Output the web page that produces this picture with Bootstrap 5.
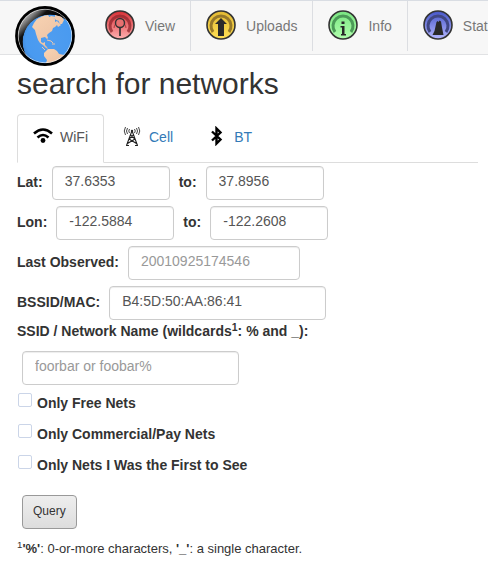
<!DOCTYPE html>
<html lang="en">
<head>
<meta charset="utf-8">
<meta name="viewport" content="width=device-width, initial-scale=1">
<title>search for networks</title>
<link href="https://cdn.jsdelivr.net/npm/bootstrap@5.3.0/dist/css/bootstrap.min.css" rel="stylesheet">
<style>
body{font-family:"Liberation Sans",Arial,sans-serif;font-size:14px;line-height:20px;color:#333;overflow-x:hidden}
.site-bar{background:#f7f7f7;border-top:1px solid #d9dde3;border-bottom:1px solid #e1e2e4;height:55px}
.globe-link{width:60px;height:60px;margin:5px 0 0 15px;z-index:2}
.bar-links{margin-left:15px}
.bar-links a{color:#777;padding:10px 15px;gap:10px;height:50px;border-right:1px solid #dcdee2}
.bar-links svg{margin-bottom:2px}
.search-area{padding:11px 10px 8px 17px}
h1{font-size:30px;line-height:36px;margin:0 0 12px}
.nav-tabs{--bs-nav-tabs-border-color:#ddd;--bs-nav-tabs-link-active-border-color:#ddd #ddd #fff;--bs-nav-tabs-link-active-color:#555;--bs-nav-link-color:#337ab7;--bs-nav-tabs-border-radius:4px}
.nav-tabs .nav-link{height:49px;padding:0 15px;display:flex;align-items:center;gap:7px;margin-right:2px}
.nav-tabs .nav-link svg{margin-bottom:6px}
.nav-tabs .nav-link span{padding-bottom:3px}
.search-row{gap:9px;height:40px}
.search-row label{padding-bottom:2px}
label{font-weight:700}
.form-control{width:118px;height:34px;padding:4px 12px 8px;font-size:14px;line-height:20px;color:#555;border:1px solid #ccc;border-radius:4px;box-shadow:inset 0 1px 1px rgba(0,0,0,.075)}
.form-control::placeholder{color:#999}
.w-date{width:172px}
.w-name{width:217px}
.ssid-label{margin-top:-2px}
.ssid-input{margin:10px 5px 8px}
.check-row{gap:5px;height:20px;margin-bottom:11px}
.check-row .form-check-input{width:14px;height:14px;margin:0 0 6px 1px;border:1px solid #cbd5e8;border-radius:2px}
.query-btn{height:34px;margin:9px 5px 0;padding:0 10px 3px;font-size:12px;color:#333;border:1px solid #999;border-radius:4px;background:linear-gradient(#eee,#ddd)}
.footnote{font-size:13px;margin:10px 0 0}
sup{font-size:75%}
</style>
<script src="https://cdn.jsdelivr.net/npm/bootstrap@5.3.0/dist/js/bootstrap.bundle.min.js"></script>
</head>
<body>
<header class="site-bar d-flex align-items-start">
<a href="#" class="globe-link flex-shrink-0 position-relative" aria-label="Home">
<svg width="60" height="60" viewBox="0 0 60 60" class="d-block">
<defs>
<linearGradient id="shade" x1=".1" y1=".1" x2=".5" y2=".5"><stop offset="0" stop-color="#ddd"/><stop offset=".25" stop-color="#888"/><stop offset=".5" stop-color="#111"/><stop offset="1" stop-color="#000"/></linearGradient>
<radialGradient id="sea" cx=".5" cy=".45" r=".55"><stop offset="0" stop-color="#4f9df0"/><stop offset=".8" stop-color="#499af0"/><stop offset="1" stop-color="#4184d0"/></radialGradient>
<linearGradient id="landTone" x1=".2" y1=".1" x2=".9" y2="1"><stop offset="0" stop-color="#f6d0b0"/><stop offset=".6" stop-color="#eec6a8"/><stop offset="1" stop-color="#c09c84"/></linearGradient>
<clipPath id="disc"><circle cx="30" cy="30" r="27.500"/></clipPath>
<clipPath id="ball"><circle cx="35" cy="36" r="27.500"/></clipPath>
</defs>
<circle cx="30" cy="30" r="28.700" fill="url(#shade)"/>
<g clip-path="url(#disc)"><g clip-path="url(#ball)">
<circle cx="35" cy="36" r="27.500" fill="url(#sea)"/>
<path fill="url(#landTone)" d="M17 21l2-4 3-4 6-3 5-1 2 3 2-1 3 2 0 3 2-1 2 2 2 2-3 2-1-2-2 2-2 1-1 3-3 2-2 2 1 3-1 1-2-2-4 1 0 4 2 1 2-1 0 3 2 2 1 2-2-1-3-3-3-2-2-3-2-6-1-4zM33 12l3-2 5 1 5 2-2 2-3-1-2-2zM40 9l6 1 3 4-2 4-2 0-2-4-3-2z"/>
<path fill="url(#landTone)" d="M29 47l2-2 2-2 6 0 3 2 2 3 5 1 1 3-4 6-10 4-6-2 2-6-3-4z"/>
<path d="M32 34l4 1 2 2M37 38l3 0M27 41l3 3" stroke="#eac6ad" fill="none"/>
</g><circle cx="30" cy="30" r="26.800" fill="none" stroke="#eee" stroke-opacity=".7"/></g>
<circle cx="30" cy="30" r="28.600" fill="none" stroke="#000" stroke-width="2.600"/>
</svg></a>
<nav class="bar-links d-flex flex-nowrap flex-grow-1 overflow-hidden" aria-label="Main">
<a href="#" class="d-flex align-items-center text-decoration-none flex-shrink-0"><svg width="30" height="30" viewBox="0 0 30 30"><defs><linearGradient id="red" x2="0" y2="1"><stop stop-color="#d82f35"/><stop offset="1" stop-color="#ffb0b0"/></linearGradient></defs><circle cx="15" cy="15" r="14" fill="url(#red)" stroke="#333" stroke-width="1.6"/><path d="M7 22A10 10 0 1 1 23 22" fill="none" stroke="#90262c" stroke-opacity=".75" stroke-width="3"/><path d="M9 18A6 6 0 0 1 21 18" fill="none" stroke="#b33a3d" stroke-width="1"/><circle cx="15" cy="13" r="4.5" fill="#e77070" stroke="#333" stroke-width="1.4"/><path d="M15 17.5V26" stroke="#333" stroke-width="1.7"/></svg><span>View</span></a>
<a href="#" class="d-flex align-items-center text-decoration-none flex-shrink-0"><svg width="30" height="30" viewBox="0 0 30 30"><defs><linearGradient id="gold" x2="0" y2="1"><stop stop-color="#e2b932"/><stop offset="1" stop-color="#ffdf55"/></linearGradient></defs><circle cx="15" cy="15" r="14" fill="url(#gold)" stroke="#333" stroke-width="1.6"/><path d="M7 22A10 10 0 1 1 23 22" fill="none" stroke="#96782a" stroke-width="3"/><path d="M15 8l6 6h-3v12h-6V14H9z" fill="#2b2b2b"/></svg><span>Uploads</span></a>
<a href="#" class="d-flex align-items-center text-decoration-none flex-shrink-0"><svg width="30" height="30" viewBox="0 0 30 30"><defs><linearGradient id="green" x2="0" y2="1"><stop stop-color="#79e581"/><stop offset="1" stop-color="#b1ffad"/></linearGradient></defs><circle cx="15" cy="15" r="14" fill="url(#green)" stroke="#333" stroke-width="1.6"/><path d="M7 22A10 10 0 1 1 23 22" fill="none" stroke="#4c9a58" stroke-width="3"/><path d="M13.5 11.5h3v2.5h-3zM12.500 16h4v8h1.5v1.500h-5V24h1v-6.500h-1.500z" fill="#282828"/></svg><span>Info</span></a>
<a href="#" class="d-flex align-items-center text-decoration-none flex-shrink-0"><svg width="30" height="30" viewBox="0 0 30 30"><defs><linearGradient id="blue" x2="0" y2="1"><stop stop-color="#4656c8"/><stop offset="1" stop-color="#b4b7ff"/></linearGradient></defs><circle cx="15" cy="15" r="14" fill="url(#blue)" stroke="#333" stroke-width="1.6"/><path d="M7 22A10 10 0 1 1 23 22" fill="none" stroke="#404783" stroke-width="3"/><path d="M9.500 25l2-4 2-9 1-1 1 1 1-1.500 1.500 1 1 6 1.500 7.500z" fill="#292929"/></svg><span>Stats</span></a>
</nav>
</header>
<main class="search-area">
<h1>search for networks</h1>
<ul class="nav nav-tabs flex-nowrap">
<li class="nav-item"><a class="nav-link active" aria-current="page" href="#"><svg width="20" height="20" viewBox="0 0 20 20"><path d="M1 7.500Q10-.5 19 7.500M4.500 11.500Q10 6.500 15.500 11.500" fill="none" stroke="#000" stroke-width="2.600"/><circle cx="10" cy="14.500" r="2.400"/></svg><span>WiFi</span></a></li>
<li class="nav-item"><a class="nav-link" href="#"><svg width="20" height="20" viewBox="0 0 20 20"><path d="M4.500 19.500L9.500 6h1l5 13.500M7 13l7.500 4.500M13 13l-7.500 4.500M8.500 9l4.500 4M11.500 9L7 13M4 19.500h3M13 19.500h3" fill="none" stroke="#222" stroke-width="1.100"/><path d="M3.500 1Q1 5 3.500 9M5.500 2Q3.500 5 5.500 8M7.500 3Q6 5 7.500 7M16.500 1Q19 5 16.500 9M14.500 2Q16.500 5 14.500 8M12.500 3Q14 5 12.500 7" fill="none" stroke="#444" stroke-width="1"/><circle cx="10" cy="5" r="1.200" fill="#222"/></svg><span>Cell</span></a></li>
<li class="nav-item"><a class="nav-link" href="#"><svg width="20" height="20" viewBox="0 0 20 20"><path d="M5 5.500l8.500 8-4 4v-15l4 4L5 14.500" fill="none" stroke="#000" stroke-width="2.400"/></svg><span>BT</span></a></li>
</ul>
<form>
<div class="search-row d-flex align-items-center"><label for="lat1">Lat:</label><input class="form-control" id="lat1" value="37.6353"><label for="lat2">to:</label><input class="form-control" id="lat2" value="37.8956"></div>
<div class="search-row d-flex align-items-center"><label for="lon1">Lon:</label><input class="form-control" id="lon1" value="-122.5884"><label for="lon2">to:</label><input class="form-control" id="lon2" value="-122.2608"></div>
<div class="search-row d-flex align-items-center"><label for="seen">Last Observed:</label><input class="form-control w-date" id="seen" placeholder="20010925174546"></div>
<div class="search-row d-flex align-items-center"><label for="mac">BSSID/MAC:</label><input class="form-control w-name" id="mac" value="B4:5D:50:AA:86:41"></div>
<label for="ssid" class="ssid-label d-block">SSID / Network Name (wildcards<sup>1</sup>: % and _):</label>
<input class="form-control w-name ssid-input" id="ssid" placeholder="foorbar or foobar%">
<div class="check-row d-flex align-items-center"><input class="form-check-input" type="checkbox" id="free"><label for="free">Only Free Nets</label></div>
<div class="check-row d-flex align-items-center"><input class="form-check-input" type="checkbox" id="pay"><label for="pay">Only Commercial/Pay Nets</label></div>
<div class="check-row d-flex align-items-center"><input class="form-check-input" type="checkbox" id="first"><label for="first">Only Nets I Was the First to See</label></div>
<button type="submit" class="btn query-btn">Query</button>
</form>
<p class="footnote"><sup>1</sup><b>'%'</b>: 0-or-more characters, <b>'_'</b>: a single character.</p>
</main>
</body>
</html>
